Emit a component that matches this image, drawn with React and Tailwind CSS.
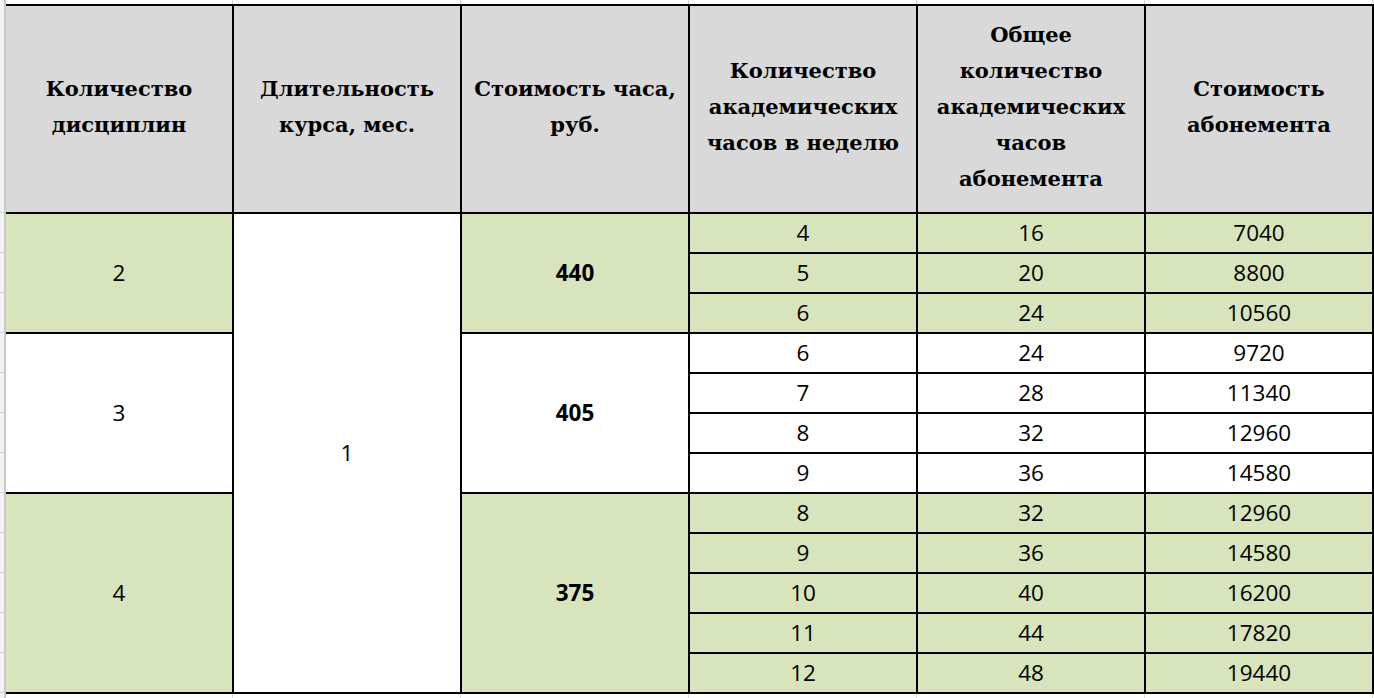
import React from "react";

const groups = [
  { n: "2", price: "440", green: true, rows: [[4, 16, 7040], [5, 20, 8800], [6, 24, 10560]], span: "row-span-3" },
  { n: "3", price: "405", green: false, rows: [[6, 24, 9720], [7, 28, 11340], [8, 32, 12960], [9, 36, 14580]], span: "row-span-4" },
  { n: "4", price: "375", green: true, rows: [[8, 32, 12960], [9, 36, 14580], [10, 40, 16200], [11, 44, 17820], [12, 48, 19440]], span: "row-span-5" },
];

const headers = [
  ["Количество", "дисциплин"],
  ["Длительность", "курса, мес."],
  ["Стоимость часа,", "руб."],
  ["Количество", "академических", "часов в неделю"],
  ["Общее", "количество", "академических", "часов", "абонемента"],
  ["Стоимость", "абонемента"],
];

const dataFont = "font-['Open_Sans',sans-serif] text-[22.5px] text-black";

function GridBand() {
  return (
    <div className="h-[4px] flex shrink-0">
      <div className="w-[227px] border-r border-[#dadada]" />
      <div className="w-[228px] border-r border-[#dadada]" />
      <div className="w-[228px] border-r border-[#dadada]" />
      <div className="w-[228px] border-r border-[#dadada]" />
      <div className="w-[228px] border-r border-[#dadada]" />
      <div className="w-[228px] border-r border-[#dadada]" />
    </div>
  );
}

export default function App() {
  const cells = [];
  headers.forEach((lines, i) => {
    cells.push(
      <div
        key={"h" + i}
        className="bg-[#d9d9d9] flex flex-col items-center justify-center text-center font-['DejaVu_Serif',serif] font-bold text-[21px] leading-[36px] text-black pb-[5px]"
      >
        {lines.map((l, j) => (
          <span key={j} className="whitespace-nowrap">{l}</span>
        ))}
      </div>
    );
  });

  groups.forEach((g, gi) => {
    const bg = g.green ? "bg-[#d8e4bc]" : "bg-white";
    g.rows.forEach((r, ri) => {
      if (ri === 0) {
        cells.push(
          <div key={`g${gi}c1`} className={`${g.span} ${bg} flex items-center justify-center ${dataFont}`}>
            {g.n}
          </div>
        );
        if (gi === 0) {
          cells.push(
            <div key="dur" className={`row-span-12 bg-white flex items-center justify-center ${dataFont}`}>
              1
            </div>
          );
        }
        cells.push(
          <div key={`g${gi}c3`} className={`${g.span} ${bg} flex items-center justify-center font-bold ${dataFont}`}>
            {g.price}
          </div>
        );
      }
      r.forEach((v, vi) => {
        cells.push(
          <div key={`g${gi}r${ri}v${vi}`} className={`${bg} flex items-center justify-center ${dataFont}`}>
            {v}
          </div>
        );
      });
    });
  });

  return (
    <div className="w-[1374px] h-[698px] bg-white flex overflow-hidden">
      <div className="w-[6px] h-full shrink-0 flex flex-col bg-[#f3f3f3] border-r-2 border-[#c9c9c9]">
        <div className="h-[213px] shrink-0 border-b border-[#d4d4d4]" />
        {Array.from({ length: 12 }).map((_, i) => (
          <div key={i} className="h-[40px] shrink-0 border-b border-[#d4d4d4]" />
        ))}
      </div>
      <div className="flex flex-col">
        <GridBand />
        <div className="grid grid-cols-[repeat(6,226px)] grid-rows-[206px_repeat(12,38px)] gap-[2px] bg-black border-t-2 border-r-2 border-b-2 border-black">
          {cells}
        </div>
        <GridBand />
      </div>
    </div>
  );
}
